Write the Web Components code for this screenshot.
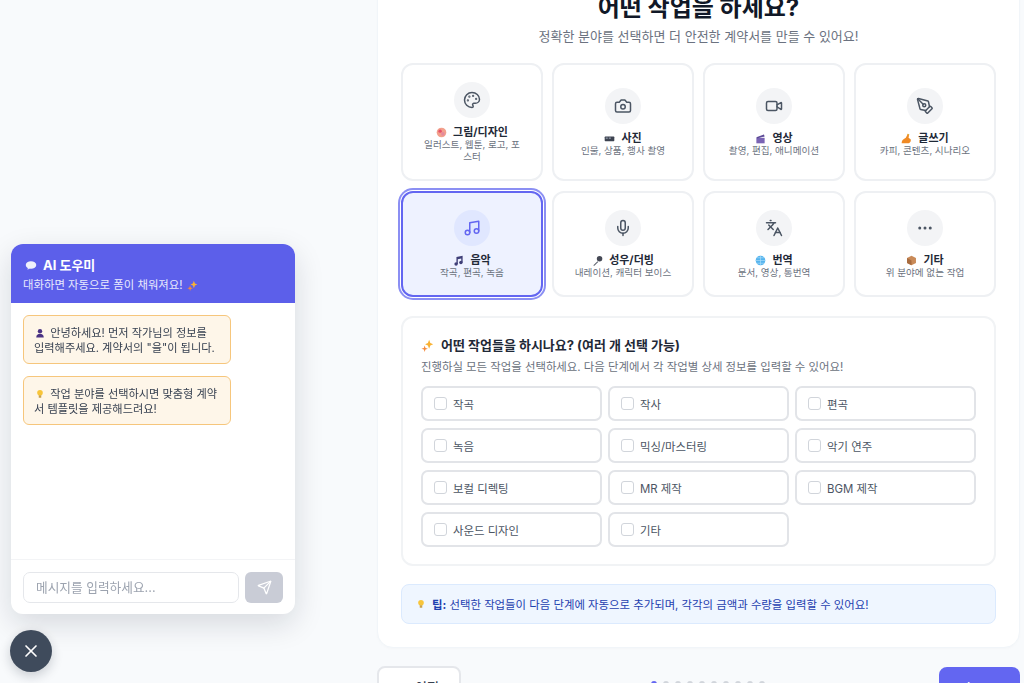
<!DOCTYPE html>
<html lang="ko">
<head>
<meta charset="utf-8">
<title>AI 도우미</title>
<style>
  html, body { margin: 0; height: 100%; overflow: hidden; }
  body {
    background: #f8fafc;
    color: #111827;
    font-family: Inter, "Noto Sans CJK KR", "Noto Sans", sans-serif;
  }
</style>
</head>
<body>
<wizard-page>
  <h-title slot="head" title="어떤 작업을 하세요?" sub="정확한 분야를 선택하면 더 안전한 계약서를 만들 수 있어요!"></h-title>
  <field-card icon="palette" emoji="palette" name="그림/디자인" desc="일러스트, 웹툰, 로고, 포스터"></field-card>
  <field-card icon="camera" emoji="film" name="사진" desc="인물, 상품, 행사 촬영"></field-card>
  <field-card icon="video" emoji="clapper" name="영상" desc="촬영, 편집, 애니메이션"></field-card>
  <field-card icon="pen" emoji="write" name="글쓰기" desc="카피, 콘텐츠, 시나리오"></field-card>
  <field-card icon="music" emoji="notes" name="음악" desc="작곡, 편곡, 녹음" selected></field-card>
  <field-card icon="mic" emoji="micro" name="성우/더빙" desc="내레이션, 캐릭터 보이스"></field-card>
  <field-card icon="languages" emoji="globe" name="번역" desc="문서, 영상, 통번역"></field-card>
  <field-card icon="more" emoji="box" name="기타" desc="위 분야에 없는 작업"></field-card>
  <work-panel slot="panel">
    <work-option>작곡</work-option>
    <work-option>작사</work-option>
    <work-option>편곡</work-option>
    <work-option>녹음</work-option>
    <work-option>믹싱/마스터링</work-option>
    <work-option>악기 연주</work-option>
    <work-option>보컬 디렉팅</work-option>
    <work-option>MR 제작</work-option>
    <work-option>BGM 제작</work-option>
    <work-option>사운드 디자인</work-option>
    <work-option>기타</work-option>
  </work-panel>
  <tip-box slot="tip"><b>팁:</b> 선택한 작업들이 다음 단계에 자동으로 추가되며, 각각의 금액과 수량을 입력할 수 있어요!</tip-box>
  <wizard-nav slot="nav"></wizard-nav>
</wizard-page>

<chat-widget>
  <chat-bubble emoji="person">안녕하세요! 먼저 작가님의 정보를 입력해주세요. 계약서의 "을"이 됩니다.</chat-bubble>
  <chat-bubble emoji="bulb">작업 분야를 선택하시면 맞춤형 계약서 템플릿을 제공해드려요!</chat-bubble>
</chat-widget>
<chat-toggle></chat-toggle>

<script>
const ICONS = {
  palette: '<circle cx="13.5" cy="6.5" r=".5" fill="currentColor"/><circle cx="17.5" cy="10.5" r=".5" fill="currentColor"/><circle cx="8.5" cy="7.5" r=".5" fill="currentColor"/><circle cx="6.5" cy="12.5" r=".5" fill="currentColor"/><path d="M12 2C6.5 2 2 6.5 2 12s4.5 10 10 10c.926 0 1.648-.746 1.648-1.688 0-.437-.18-.835-.437-1.125-.29-.289-.438-.652-.438-1.125a1.64 1.64 0 0 1 1.668-1.668h1.996c3.051 0 5.555-2.503 5.555-5.554C21.965 6.012 17.461 2 12 2z"/>',
  camera: '<path d="M14.5 4h-5L7 7H4a2 2 0 0 0-2 2v9a2 2 0 0 0 2 2h16a2 2 0 0 0 2-2V9a2 2 0 0 0-2-2h-3l-2.5-3z"/><circle cx="12" cy="13" r="3"/>',
  video: '<path d="m16 13 5.223 3.482a.5.5 0 0 0 .777-.416V7.87a.5.5 0 0 0-.752-.432L16 10.5"/><rect x="2" y="6" width="14" height="12" rx="2"/>',
  pen: '<path d="M15.707 21.293a1 1 0 0 1-1.414 0l-1.586-1.586a1 1 0 0 1 0-1.414l5.586-5.586a1 1 0 0 1 1.414 0l1.586 1.586a1 1 0 0 1 0 1.414z"/><path d="m18 13-1.375-6.874a1 1 0 0 0-.746-.776L3.235 2.028a1 1 0 0 0-1.207 1.207L5.35 15.879a1 1 0 0 0 .776.746L13 18"/><path d="m2.3 2.3 7.286 7.286"/><circle cx="11" cy="11" r="2"/>',
  music: '<path d="M9 18V5l12-2v13"/><circle cx="6" cy="18" r="3"/><circle cx="18" cy="16" r="3"/>',
  mic: '<path d="M12 2a3 3 0 0 0-3 3v7a3 3 0 0 0 6 0V5a3 3 0 0 0-3-3Z"/><path d="M19 10v2a7 7 0 0 1-14 0v-2"/><path d="M12 19v3"/>',
  languages: '<path d="m5 8 6 6"/><path d="m4 14 6-6 2-3"/><path d="M2 5h12"/><path d="M7 2h1"/><path d="m22 22-5-10-5 10"/><path d="M14 18h6"/>',
  more: '<circle cx="12" cy="12" r="1"/><circle cx="19" cy="12" r="1"/><circle cx="5" cy="12" r="1"/>',
  send: '<path d="M14.536 21.686a.5.5 0 0 0 .937-.024l6.5-19a.496.496 0 0 0-.635-.635l-19 6.5a.5.5 0 0 0-.024.937l7.93 3.18a2 2 0 0 1 1.112 1.11z"/><path d="m21.854 2.147-10.94 10.939"/>',
  x: '<path d="M18 6 6 18"/><path d="m6 6 12 12"/>'
};

// small colour pictures standing in for the emoji, there is no emoji font
const EMOJI = {
  palette: '<circle cx="8" cy="8" r="7" fill="#f2a08c"/><circle cx="6" cy="6" r="2.5" fill="#e8506a"/><circle cx="10" cy="10" r="2.6" fill="#e58a9c"/>',
  film: '<rect x="1" y="5" width="14" height="7" rx="1" fill="#3d4350"/><rect x="2.500" y="6.500" width="3" height="2" fill="#8b93a3"/><rect x="7" y="6.500" width="3" height="2" fill="#8b93a3"/>',
  clapper: '<rect x="2" y="7" width="12" height="8" fill="#7a64b4"/><path d="M2 6 13 2l1 3L3 8z" fill="#5c4a96"/>',
  write: '<path d="M1 15c0-5 3-6 6-8l3-6 2 1-1 5 3 2c1 3-1 6-4 6z" fill="#f08a24"/><path d="M9 2l1-1 2 1-1 2z" fill="#e0b040"/>',
  notes: '<path d="M5 3l9-2v10h-2V5L7 6v7H5z" fill="#3f3f78"/><circle cx="4.500" cy="13" r="2.500" fill="#3f3f78"/><circle cx="11.500" cy="11" r="2.500" fill="#3f3f78"/>',
  micro: '<path d="M2 15l6-6 1 1-6 6z" fill="#5a5f6b"/><circle cx="11" cy="5.500" r="4" fill="#454955"/>',
  globe: '<circle cx="8" cy="8" r="7" fill="#55b4ee"/><path d="M1 8h14M8 1v14M3 4h10M3 12h10" stroke="#a9dcf8" stroke-width="1"/>',
  box: '<path d="M8 1l6.500 3.500v7L8 15l-6.500-3.500v-7z" fill="#c98a58"/><path d="M8 8v7l-6.500-3.500v-7z" fill="#a86c3f"/>',
  person: '<circle cx="8" cy="5" r="3.500" fill="#4a3384"/><path d="M2 15c0-4 2.500-6 6-6s6 2 6 6z" fill="#4a3384"/>',
  bulb: '<circle cx="8" cy="6" r="4.500" fill="#f8c53a"/><rect x="6" y="10" width="4" height="4" fill="#c9a24a"/>',
  sparkles: '<path d="M10 1l1.500 4L15 6.500 11.500 8 10 12 8.500 8 5 6.500 8.500 5z" fill="#f9b233"/><path d="M4.500 8l1 3 3 1-3 1-1 3-1-3-3-1 3-1z" fill="#f58a3c"/>',
  bubble: '<ellipse cx="8" cy="8" rx="7" ry="5" fill="#eef0fb"/><path d="M4 12l-1 2 4-1z" fill="#eef0fb"/>'
};

function icon(name, size) {
  return `<svg width="${size}" height="${size}" viewBox="0 0 24 24" fill="none" stroke="currentColor" stroke-width="2" stroke-linecap="round" stroke-linejoin="round" aria-hidden="true">${ICONS[name]}</svg>`;
}
function emoji(name, size) {
  return `<svg class="emoji" width="${size}" height="${size}" viewBox="0 0 16 16" aria-hidden="true">${EMOJI[name]}</svg>`;
}

class WizardPage extends HTMLElement {
  constructor() {
    super();
    this.attachShadow({mode: 'open'}).innerHTML = `
      <style>
        :host { display: block; width: 643px; margin: -25px 4px 0 auto; }
        .card {
          background: #fff;
          border: 1px solid #f1f5f9;
          border-radius: 16px;
          padding: 16px 23px 23px;
          box-shadow: 0 1px 3px rgba(15, 23, 42, .02);
        }
        .grid { display: grid; grid-template-columns: repeat(4, 142px); gap: 10px 9px; margin-bottom: 19px; }
        ::slotted([slot=panel]) { margin-bottom: 18px; }
      </style>
      <div class="card">
        <slot name="head"></slot>
        <div class="grid"><slot></slot></div>
        <slot name="panel"></slot>
        <slot name="tip"></slot>
      </div>
      <slot name="nav"></slot>
    `;
  }
}

class HTitle extends HTMLElement {
  constructor() {
    super();
    this.attachShadow({mode: 'open'}).innerHTML = `
      <style>
        :host { display: block; text-align: center; margin-bottom: 18px; }
        h1 { margin: 0; font-size: 24px; line-height: 32px; font-weight: 700; color: #111827; }
        p { margin: 3px 0 0; font-size: 13px; line-height: 18px; color: #6b7280; }
      </style>
      <h1>${this.getAttribute('title')}</h1>
      <p>${this.getAttribute('sub')}</p>
    `;
    this.removeAttribute('title');
  }
}

class FieldCard extends HTMLElement {
  constructor() {
    super();
    this.attachShadow({mode: 'open'}).innerHTML = `
      <style>
        :host {
          display: flex; flex-direction: column; align-items: center; justify-content: center;
          box-sizing: border-box; padding: 17px 18px 16px;
          background: #fff; border: 2px solid #eef0f3; border-radius: 12px; text-align: center;
        }
        :host([selected]) {
          background: #eef2ff; border-color: #6366f1;
          box-shadow: 0 0 0 1px #fff, 0 0 0 3px #8b8ff3;
        }
        .circle {
          width: 36px; height: 36px; border-radius: 50%; background: #f3f4f6; color: #4b5563;
          display: flex; align-items: center; justify-content: center; margin-bottom: 7px;
        }
        :host([selected]) .circle { background: #e0e7ff; color: #6366f1; }
        .name { font-size: 11px; line-height: 14px; font-weight: 700; color: #1f2937; display: flex; align-items: center; gap: 6px; }
        .desc { font-size: 9.6px; line-height: 12px; color: #6b7280; }
      </style>
      <div class="circle">${icon(this.getAttribute('icon'), 18)}</div>
      <div class="name">${emoji(this.getAttribute('emoji'), 11)}<span>${this.getAttribute('name')}</span></div>
      <div class="desc">${this.getAttribute('desc')}</div>
    `;
  }
}

class WorkPanel extends HTMLElement {
  constructor() {
    super();
    this.attachShadow({mode: 'open'}).innerHTML = `
      <style>
        :host { display: block; background: #fff; border: 2px solid #f1f3f5; border-radius: 12px; padding: 18px 18px 17px; }
        h3 { margin: 0; font-size: 13px; line-height: 18px; font-weight: 700; color: #1f2937; display: flex; align-items: center; gap: 7px; }
        p { margin: 5px 0 11px; font-size: 11.4px; line-height: 16px; color: #6b7280; white-space: nowrap; }
        .grid { display: grid; grid-template-columns: repeat(3, 1fr); gap: 7px 6px; }
      </style>
      <h3>${emoji('sparkles', 13)}<span>어떤 작업들을 하시나요? (여러 개 선택 가능)</span></h3>
      <p>진행하실 모든 작업을 선택하세요. 다음 단계에서 각 작업별 상세 정보를 입력할 수 있어요!</p>
      <div class="grid"><slot></slot></div>
    `;
  }
}

class WorkOption extends HTMLElement {
  constructor() {
    super();
    this.attachShadow({mode: 'open'}).innerHTML = `
      <style>
        :host {
          display: flex; align-items: center; gap: 6px; box-sizing: border-box; height: 35px; padding: 0 11px;
          border: 2px solid #e2e4e8; border-radius: 7px; background: #fff;
          font-size: 11.4px; color: #4b5563;
        }
        i { width: 11px; height: 11px; border: 1.5px solid #d1d5db; border-radius: 3px; background: #fff; }
      </style>
      <i></i><span><slot></slot></span>
    `;
  }
}

class TipBox extends HTMLElement {
  constructor() {
    super();
    this.attachShadow({mode: 'open'}).innerHTML = `
      <style>
        :host {
          display: flex; align-items: center; gap: 6px; box-sizing: border-box; height: 40px; padding: 0 14px;
          background: #eff6ff; border: 1px solid #dbeafe; border-radius: 8px;
          font-size: 11.4px; color: #1e40af; white-space: nowrap;
        }
      </style>
      ${emoji('bulb', 10)}<span><slot></slot></span>
    `;
  }
}

class WizardNav extends HTMLElement {
  constructor() {
    super();
    this.attachShadow({mode: 'open'}).innerHTML = `
      <style>
        :host { display: flex; justify-content: space-between; align-items: flex-start; margin-top: 18px; }
        button {
          font: 500 13px Inter, "Noto Sans CJK KR", sans-serif; height: 40px; border-radius: 8px; padding: 0;
          display: flex; align-items: center; justify-content: center; gap: 6px;
        }
        .prev { width: 84px; background: #fff; border: 2px solid #e5e7eb; color: #374151; }
        .next { width: 81px; background: #6366f1; border: 0; color: #fff; margin-top: 1px; }
        .dots { display: flex; gap: 6px; margin: 15px 0 0 16px; }
        .dots i { width: 6px; height: 6px; border-radius: 50%; background: #d1d5db; }
        .dots i:first-child { background: #6366f1; }
      </style>
      <button class="prev">← 이전</button>
      <div class="dots">${'<i></i>'.repeat(10)}</div>
      <button class="next">다음 →</button>
    `;
  }
}

class ChatWidget extends HTMLElement {
  constructor() {
    super();
    this.attachShadow({mode: 'open'}).innerHTML = `
      <style>
        :host {
          position: fixed; left: 11px; top: 244px; width: 284px; height: 370px;
          display: flex; flex-direction: column; background: #fff; border-radius: 12px;
          box-shadow: 0 10px 30px rgba(15, 23, 42, .14);
        }
        header { background: #5c5fea; color: #fff; border-radius: 12px 12px 0 0; height: 59px; box-sizing: border-box; padding: 12px 12px 0; }
        .t { font-size: 13px; line-height: 18px; font-weight: 700; display: flex; align-items: center; gap: 6px; }
        .t svg { margin-left: 2px; }
        .s { font-size: 11.4px; line-height: 16px; margin-top: 3px; color: #e8e9fd; display: flex; align-items: center; gap: 4px; }
        .msgs { flex: 1; padding: 12px; display: flex; flex-direction: column; gap: 12px; align-items: flex-start; }
        footer { height: 55px; box-sizing: border-box; border-top: 1px solid #f3f4f6; padding: 12px; display: flex; gap: 6px; }
        .input {
          flex: 1; box-sizing: border-box; height: 31px; border: 1px solid #e5e7eb; border-radius: 7px;
          padding: 0 12px; font-size: 12.7px; line-height: 29px; color: #9ca3af;
        }
        .send { width: 38px; height: 31px; border-radius: 6px; background: #c9ccd6; color: #fff; display: flex; align-items: center; justify-content: center; }
      </style>
      <header>
        <div class="t">${emoji('bubble', 12)}<span>AI 도우미</span></div>
        <div class="s"><span>대화하면 자동으로 폼이 채워져요!</span>${emoji('sparkles', 11)}</div>
      </header>
      <div class="msgs"><slot></slot></div>
      <footer>
        <div class="input">메시지를 입력하세요...</div>
        <div class="send">${icon('send', 15)}</div>
      </footer>
    `;
  }
}

class ChatBubble extends HTMLElement {
  constructor() {
    super();
    this.attachShadow({mode: 'open'}).innerHTML = `
      <style>
        :host {
          display: block; box-sizing: border-box; width: 208px; height: 49px; padding: 10px 10px 8px 10px;
          background: #fef6e9; border: 1px solid #f6c67c; border-radius: 6px;
          font-size: 11.2px; line-height: 15px; color: #374151;
        }
        svg { vertical-align: -1px; margin: 0 2px 0 1px; }
      </style>
      ${emoji(this.getAttribute('emoji'), 10)} <slot></slot>
    `;
  }
}

class ChatToggle extends HTMLElement {
  constructor() {
    super();
    this.attachShadow({mode: 'open'}).innerHTML = `
      <style>
        :host {
          position: fixed; left: 10px; top: 630px; width: 42px; height: 42px; border-radius: 50%;
          background: #3f4b5c; color: #fff; display: flex; align-items: center; justify-content: center;
          box-shadow: 0 4px 12px rgba(15, 23, 42, .2);
        }
      </style>
      ${icon('x', 20)}
    `;
  }
}

customElements.define('wizard-page', WizardPage);
customElements.define('h-title', HTitle);
customElements.define('field-card', FieldCard);
customElements.define('work-panel', WorkPanel);
customElements.define('work-option', WorkOption);
customElements.define('tip-box', TipBox);
customElements.define('wizard-nav', WizardNav);
customElements.define('chat-widget', ChatWidget);
customElements.define('chat-bubble', ChatBubble);
customElements.define('chat-toggle', ChatToggle);
</script>
</body>
</html>
